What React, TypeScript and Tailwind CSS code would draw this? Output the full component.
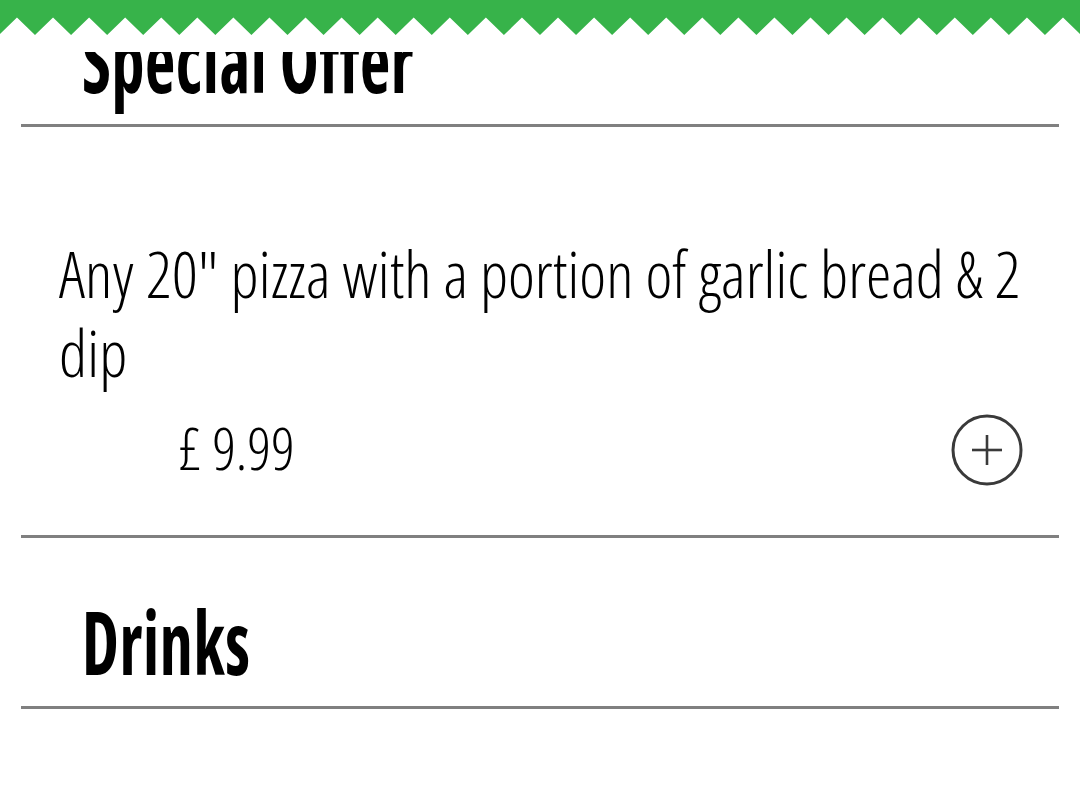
function ZigZag() {
  const period = 36.07;
  const firstTip = 35 - period * 2;
  let d = `M-80,0 L-80,17.5`;
  for (let x = firstTip; x < 1080 + period; x += period) {
    d += ` L${(x - period / 2).toFixed(2)},17.5 L${x.toFixed(2)},35`;
  }
  d += ` L1160,17.5 L1160,0 Z`;
  return (
    <svg width="1080" height="36" viewBox="0 0 1080 36" className="block">
      <path d={d} fill="#37b34a" />
    </svg>
  );
}

function PlusButton() {
  return (
    <button className="w-[72px] h-[72px] flex items-center justify-center" aria-label="Add">
      <svg width="72" height="72" viewBox="0 0 72 72">
        <circle cx="36" cy="36" r="34" fill="none" stroke="#3a3a3a" strokeWidth="3" />
        <line x1="21" y1="36" x2="51" y2="36" stroke="#3a3a3a" strokeWidth="2.6" />
        <line x1="36" y1="21" x2="36" y2="51" stroke="#3a3a3a" strokeWidth="2.6" />
      </svg>
    </button>
  );
}

function SectionHeading({ title }: { title: string }) {
  return (
    <div className="pl-[61px] h-[88px] mb-[21px]">
      <h2 className="inline-block origin-left scale-x-[0.75] text-[88px] leading-[88px] font-bold font-stretch-condensed tracking-[0.8px] text-black whitespace-nowrap">
        {title}
      </h2>
    </div>
  );
}

function Rule() {
  return <div className="h-[3px] bg-[#808080]" />;
}

export default function App() {
  return (
    <div className="min-h-[808px] bg-white font-['Open_Sans',sans-serif] text-black overflow-hidden">
      <header className="fixed top-0 left-0 right-0 h-[52px] bg-white z-20">
        <ZigZag />
      </header>
      <main className="px-[21px] pt-[15px]">
        <SectionHeading title="Special Offer" />
        <Rule />
        <div className="px-[38px] pt-[107px] pb-[49px]">
          <p className="text-[64px] leading-[79px] font-light font-stretch-condensed">
            Any 20" pizza with a portion of garlic bread &amp; 2 dip
          </p>
          <div className="mt-[22px] h-[72px] flex items-center justify-between">
            <span className="pl-[119px] text-[58px] leading-[72px] font-light font-stretch-condensed -mt-[4px]">
              £ 9.99
            </span>
            <div className="-mr-[2px]">
              <PlusButton />
            </div>
          </div>
        </div>
        <Rule />
        <div className="pt-[59px]">
          <SectionHeading title="Drinks" />
        </div>
        <Rule />
      </main>
    </div>
  );
}
